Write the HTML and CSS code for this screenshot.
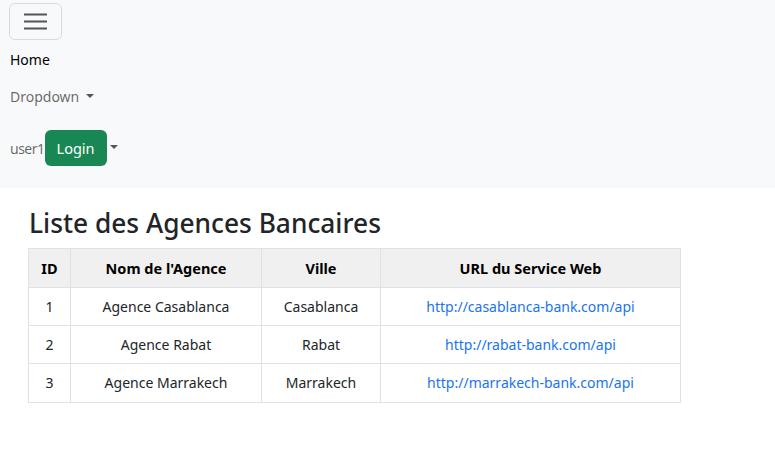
FILE: index.html
```html
<!DOCTYPE html>
<html lang="fr">
<head>
<meta charset="utf-8">
<title>Agences Bancaires</title>
<link rel="stylesheet" href="styles.css">
</head>
<body>
<nav class="navbar">
  <button class="toggler" type="button" aria-label="Toggle navigation">
    <svg width="23" height="17" viewBox="0 0 23 17"><path d="M0 1.5h23M0 8.5h23M0 15.5h23" stroke="#555" stroke-width="2" fill="none"/></svg>
  </button>
  <ul class="nav-list">
    <li class="nav-item"><a class="nav-link active" href="#">Home</a></li>
    <li class="nav-item"><a class="nav-link dropdown" href="#">Dropdown<span class="caret"></span></a></li>
    <li class="nav-item user-row">
      <span class="user">user1</span><button class="btn-login" type="button">Login</button><span class="caret caret-dark"></span>
    </li>
  </ul>
</nav>
<main class="content">
  <h2 class="title">Liste des Agences Bancaires</h2>
  <table class="agences">
    <thead>
      <tr><th class="c-id">ID</th><th class="c-nom">Nom de l'Agence</th><th class="c-ville">Ville</th><th class="c-url">URL du Service Web</th></tr>
    </thead>
    <tbody>
      <tr><td>1</td><td>Agence Casablanca</td><td>Casablanca</td><td><a href="#">http://casablanca-bank.com/api</a></td></tr>
      <tr><td>2</td><td>Agence Rabat</td><td>Rabat</td><td><a href="#">http://rabat-bank.com/api</a></td></tr>
      <tr><td>3</td><td>Agence Marrakech</td><td>Marrakech</td><td><a href="#">http://marrakech-bank.com/api</a></td></tr>
    </tbody>
  </table>
</main>
</body>
</html>
```
FILE: styles.css
```css
html, body {
  margin: 0;
  padding: 0;
  background: #fff;
  font-family: "Noto Sans", "Open Sans", sans-serif;
  color: #212529;
}
.navbar {
  background: #f8f9fa;
  height: 188px;
  box-sizing: border-box;
  padding: 3px 9px 0 10px;
}
.toggler {
  display: flex;
  align-items: center;
  justify-content: center;
  width: 53px;
  height: 37px;
  margin-left: -1px;
  padding: 0;
  background: transparent;
  border: 1px solid rgba(0,0,0,0.12);
  border-radius: 6px;
}
.nav-list {
  list-style: none;
  margin: 0;
  padding: 0;
}
.nav-link {
  display: flex;
  align-items: center;
  text-decoration: none;
  font-size: 14px;
  color: rgba(0,0,0,0.6);
}
.nav-link.active {
  color: #000;
  margin-top: 7px;
  height: 24px;
}
.nav-link.dropdown {
  margin-top: 13px;
  height: 24px;
}
.caret {
  display: inline-block;
  width: 0;
  height: 0;
  margin-left: 7px;
  border-top: 4.5px solid #555;
  border-left: 4.5px solid transparent;
  border-right: 4.5px solid transparent;
}
.user-row {
  display: flex;
  align-items: center;
  margin-top: 22px;
  font-size: 14px;
}
.user {
  color: rgba(0,0,0,0.6);
  letter-spacing: -0.5px;
}
.btn-login {
  width: 62px;
  height: 36px;
  margin-left: 0;
  padding: 0;
  border: none;
  border-radius: 6px;
  background: #198754;
  color: #fff;
  font-family: inherit;
  font-size: 14.5px;
}
.caret-dark {
  margin-left: 3px;
  margin-top: -2px;
}
.content {
  padding: 18px 0 0 28px;
}
.title {
  margin: 0 0 8px 1px;
  font-size: 26.3px;
  font-weight: 500;
  line-height: 34px;
  color: #212529;
}
.agences {
  border-collapse: collapse;
  font-size: 14px;
  text-align: center;
}
.agences th, .agences td {
  border: 1px solid #dee2e6;
  padding: 0;
  height: 37.2px;
}
.agences th {
  background: #f0f0f0;
  color: #000;
  font-weight: 700;
  font-size: 14.5px;
  height: 38px;
}
.c-id { width: 41px; }
.c-nom { width: 190px; }
.c-ville { width: 118px; }
.c-url { width: 299px; }
.agences a {
  color: #1a73f0;
  text-decoration: none;
}
```
